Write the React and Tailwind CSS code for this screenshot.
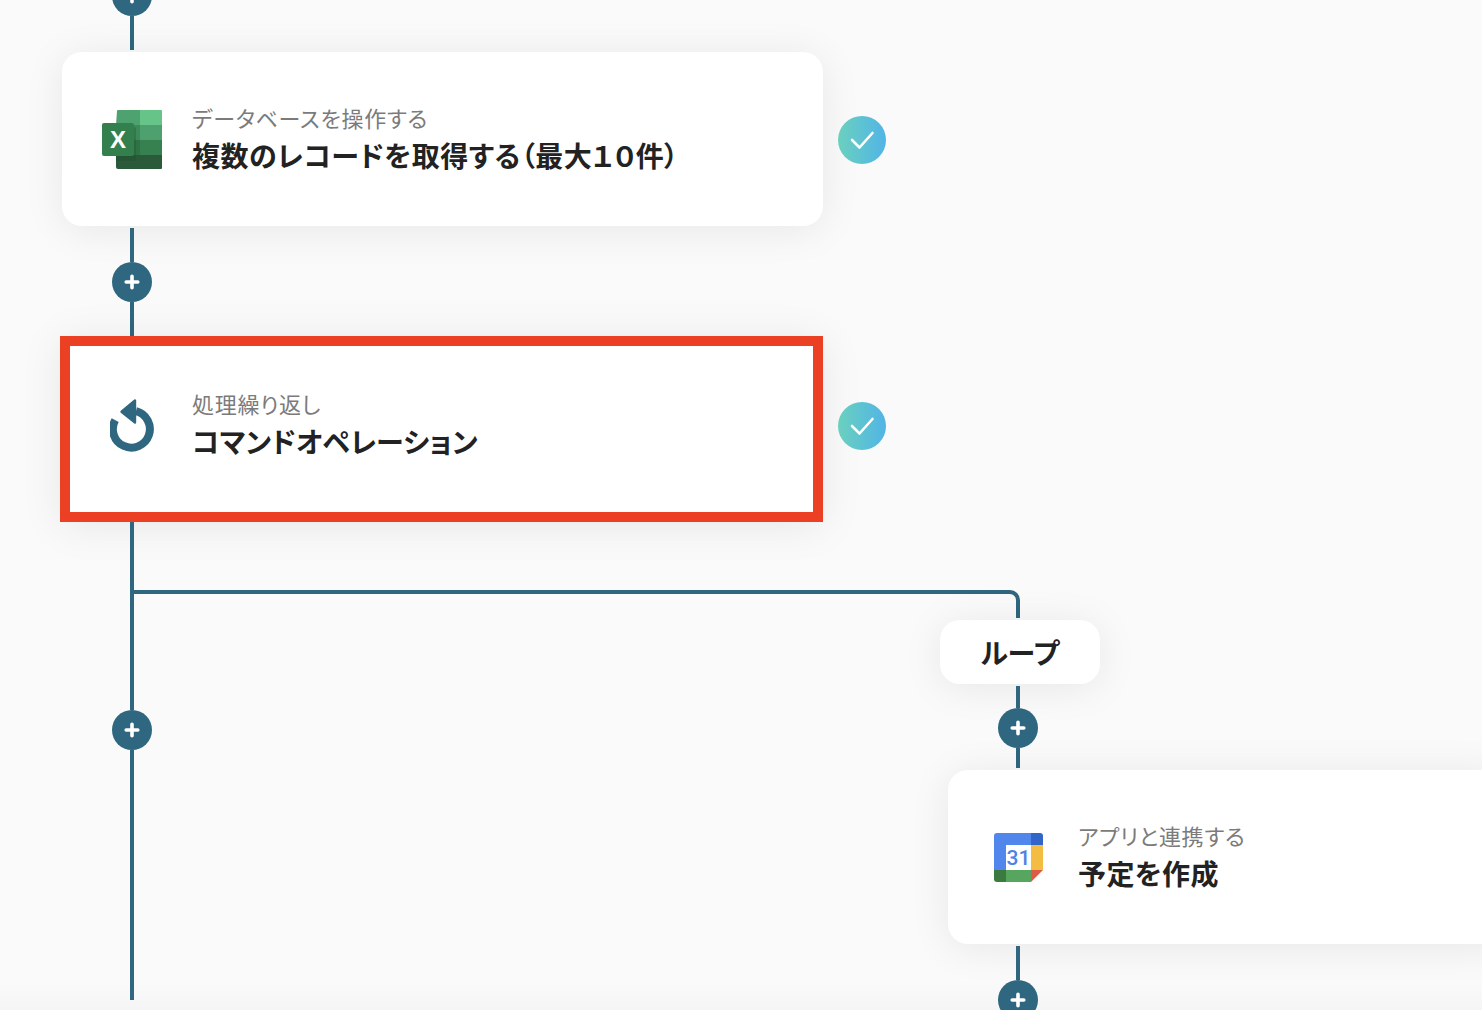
const FONT = "font-['Noto_Sans_CJK_JP',sans-serif] [font-feature-settings:'palt']"
const SHADOW = 'shadow-[0_4px_40px_rgba(0,0,0,0.08)]'

function Line({ className }) {
  return <div className={`w-1 bg-[#2e677f] ${className}`} />
}

function PlusDot({ className }) {
  return (
    <div className={`relative z-10 w-10 h-10 shrink-0 rounded-full bg-[#2e677f] flex items-center justify-center ${className}`}>
      <svg width="16" height="16" viewBox="0 0 16 16">
        <path d="M8 2.2v11.6M2.2 8h11.6" stroke="#fff" strokeWidth="3.6" strokeLinecap="round" />
      </svg>
    </div>
  )
}

function Check() {
  return (
    <div className="w-12 h-12 shrink-0 rounded-full bg-linear-to-r from-[#6bd0bd] to-[#52b4e6] flex items-center justify-center">
      <svg width="26" height="20" viewBox="0 0 26 20">
        <path d="M3 10l7.5 7.5L23.5 3" fill="none" stroke="#fff" strokeWidth="2.6" strokeLinecap="round" strokeLinejoin="round" />
      </svg>
    </div>
  )
}

function ExcelIcon() {
  return (
    <svg width="60" height="60" viewBox="0 0 60 60">
      <path d="M15 2a1 1 0 0 1 1-1h22v15H14z" fill="#4da26f" />
      <path d="M38 1h21a1 1 0 0 1 1 1v14H38z" fill="#66c488" />
      <rect x="14" y="16" width="24" height="15" fill="#3c8a5a" />
      <rect x="38" y="16" width="22" height="15" fill="#4ea06e" />
      <rect x="14" y="31" width="24" height="15" fill="#2f7345" />
      <rect x="38" y="31" width="22" height="15" fill="#37804f" />
      <path d="M14 46h46v13a1 1 0 0 1-1 1H16a2 2 0 0 1-2-2z" fill="#2a5a3a" />
      <rect x="14" y="18" width="20" height="34" rx="2" fill="#1f4d2e" opacity="0.3" />
      <rect x="0" y="14" width="32" height="33" rx="2" fill="#33804e" />
      <text x="16" y="39" textAnchor="middle" fill="#fff" fontSize="24" fontWeight="700" fontFamily="'Liberation Sans', sans-serif">X</text>
    </svg>
  )
}

function LoopIcon() {
  return (
    <svg width="46" height="55" viewBox="0 0 46 55">
      <path d="M5.2 22.1A18.5 18.5 0 1 0 26 13.2" fill="none" stroke="#2e677f" strokeWidth="8" />
      <path d="M25 2.5v22L11.5 13.7z" fill="#2e677f" stroke="#2e677f" strokeWidth="2.4" strokeLinejoin="round" />
    </svg>
  )
}

function CalendarIcon() {
  return (
    <svg width="50" height="50" viewBox="0 0 50 50">
      <path d="M12 1h27v12H13v25H1V4a3 3 0 0 1 3-3z" fill="#5186ed" />
      <path d="M38 1h9a3 3 0 0 1 3 3v9H38z" fill="#3166c8" />
      <rect x="13" y="13" width="25" height="25" fill="#fff" />
      <rect x="38" y="13" width="12" height="25" fill="#f2bd42" />
      <path d="M38 38h12L38 50z" fill="#df5b45" />
      <rect x="12" y="38" width="26" height="12" fill="#57a660" />
      <path d="M1 38h12v12H4a3 3 0 0 1-3-3z" fill="#3b7b40" />
      <text x="25.5" y="33" textAnchor="middle" fill="#4e83e6" fontSize="21" fontWeight="500" fontFamily="Roboto, sans-serif">31</text>
    </svg>
  )
}

function NodeText({ sub, title, titleClass = 'tracking-[0.4px]' }) {
  return (
    <div className={`${FONT} -mt-[3px]`}>
      <div className="text-[22px] leading-[30px] tracking-[0.7px] text-[#7b7b7b]">{sub}</div>
      <div className={`mt-1 text-[28px] leading-[38px] font-bold text-[#222222] ${titleClass}`}>{title}</div>
    </div>
  )
}

export default function App() {
  return (
    <div className="relative w-[1482px] h-[1010px] overflow-hidden bg-[#fafafa]">
      {/* soft fade along the bottom edge, under the diagram */}
      <div className="absolute inset-x-0 bottom-0 h-7 bg-linear-to-b from-transparent to-[#f5f5f5]" />

      {/* main flow */}
      <div className="relative flex flex-col ml-[60px] mt-[-24px]">
        <PlusDot className="ml-[52px]" />
        <Line className="ml-[70px] h-[34px]" />

        <div className="flex items-center mt-[2px] ml-[2px]">
          <div className={`w-[761px] h-[174px] bg-white rounded-[20px] ${SHADOW} flex items-center pl-10 gap-[30px]`}>
            <ExcelIcon />
            <NodeText sub="データベースを操作する" title="複数のレコードを取得する（最大１０件）" titleClass="tracking-[0.5px]" />
          </div>
          <div className="ml-[15px] mt-[2px]"><Check /></div>
        </div>

        <Line className="ml-[70px] mt-[2px] h-[34px]" />
        <PlusDot className="ml-[52px]" />
        <Line className="ml-[70px] h-[34px]" />

        <div className="flex items-center">
          <div className={`w-[763px] h-[186px] bg-white border-[10px] border-[#ec4024] ${SHADOW} flex items-center pl-[40px] pb-[7px] gap-[36px]`}>
            <LoopIcon />
            <NodeText sub="処理繰り返し" title="コマンドオペレーション" titleClass="tracking-[0.1px]" />
          </div>
          <div className="ml-[15px] mb-[6px]"><Check /></div>
        </div>

        <Line className="ml-[70px] h-[188px]" />
        <PlusDot className="ml-[52px]" />
        <Line className="ml-[70px] h-[250px]" />
      </div>

      {/* loop branch */}
      <div className="absolute left-[132px] top-[590px] w-[888px] h-7 border-t-4 border-r-4 border-[#2e677f] rounded-tr-[10px]" />
      <div className="absolute left-[940px] top-[620px] flex flex-col">
        <div className={`w-40 h-16 bg-white rounded-[20px] ${SHADOW} flex items-center justify-center text-[28px] font-bold text-[#222222] ${FONT}`}>
          ループ
        </div>
        <Line className="ml-[76px] mt-[2px] h-[22px]" />
        <PlusDot className="ml-[58px]" />
        <Line className="ml-[76px] h-5" />
        <div className={`ml-2 mt-[2px] w-[560px] h-[174px] bg-white rounded-[20px] ${SHADOW} flex items-center pl-[45px] gap-[35px]`}>
          <CalendarIcon />
          <NodeText sub="アプリと連携する" title="予定を作成" />
        </div>
        <Line className="ml-[76px] mt-[2px] h-[34px]" />
        <PlusDot className="ml-[58px]" />
      </div>
    </div>
  )
}
